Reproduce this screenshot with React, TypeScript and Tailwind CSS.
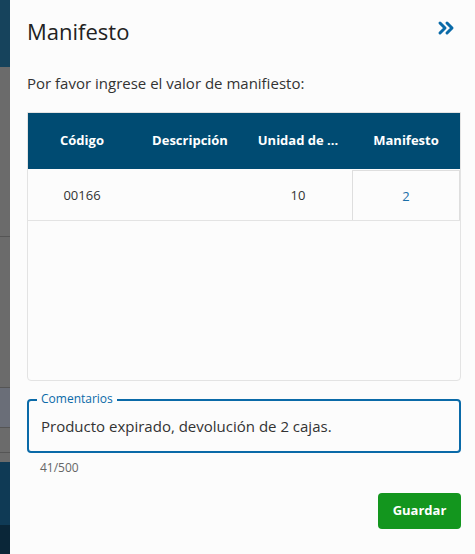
import { ChevronsRight } from "lucide-react"

const columns = ["Código", "Descripción", "Unidad de ...", "Manifesto"]

function SideStrip() {
  return (
    <div className="flex w-[10px] shrink-0 flex-col">
      <div className="h-[67px] bg-[#16435c]" />
      <div className="h-[170px] border-b border-[#555] bg-[#6b6b6b]" />
      <div className="h-[151px] border-b border-[#555] bg-[#6b6b6b]" />
      <div className="h-[40px] border-b border-[#555] bg-[#6a6e78]" />
      <div className="h-[25px] border-b border-[#555] bg-[#6b6b6b]" />
      <div className="h-[9px] bg-[#6b6b6b]" />
      <div className="h-[63px] bg-[#0f3a55]" />
      <div className="flex-1 bg-[#0a2638]" />
    </div>
  )
}

export default function App() {
  return (
    <div
      className="flex h-[554px] w-[475px] overflow-hidden bg-[#fcfcfc]"
      style={{ fontFamily: '"Open Sans", "Noto Sans", sans-serif' }}
    >
      <SideStrip />
      <div className="flex flex-1 flex-col pl-[17px] pr-[14px]">
        <div className="flex h-[62px] items-center justify-between">
          <h1 className="text-[22px] font-normal text-[#222]">Manifesto</h1>
          <ChevronsRight className="mb-[7px] mr-[3px] h-[24px] w-[24px] text-[#0a6aa8]" strokeWidth={3} />
        </div>

        <p className="mt-[10px] text-[15px] text-[#333]">Por favor ingrese el valor de manifiesto:</p>

        <div className="mt-[17px] flex h-[269px] flex-col rounded-b-[4px] border border-[#e3e3e3] bg-[#fcfcfc]">
          <div className="grid h-[56px] grid-cols-4 items-center bg-[#004b72] text-[13px] font-bold text-white">
            {columns.map((c) => (
              <div key={c} className="text-center">
                {c}
              </div>
            ))}
          </div>
          <div className="grid h-[52px] grid-cols-4 items-stretch border-b border-[#e3e3e3] text-[13px] text-[#333]">
            <div className="flex items-center justify-center pt-[4px]">00166</div>
            <div />
            <div className="flex items-center justify-center pt-[4px]">10</div>
            <div className="mt-[1px] flex items-center justify-center border-x border-t border-[#dedede] pt-[3px] text-[#1a6fa8]">
              2
            </div>
          </div>
        </div>

        <div className="relative mt-[18px] flex h-[54px] items-center rounded-[4px] border-2 border-[#0a6aa8] px-[12px]">
          <span className="absolute -top-[9px] left-[8px] bg-[#fcfcfc] px-[4px] text-[12px] leading-[14px] text-[#0a6aa8]">
            Comentarios
          </span>
          <span className="pt-[1px] text-[15px] text-[#333]">Producto expirado, devolución de 2 cajas.</span>
        </div>
        <div className="mt-[6px] pl-[13px] text-[12px] text-[#666]">41/500</div>

        <div className="mt-[16px] flex justify-end">
          <button className="h-[36px] w-[83px] rounded-[4px] bg-[#13961e] text-[13px] font-bold text-white">
            Guardar
          </button>
        </div>
      </div>
    </div>
  )
}
